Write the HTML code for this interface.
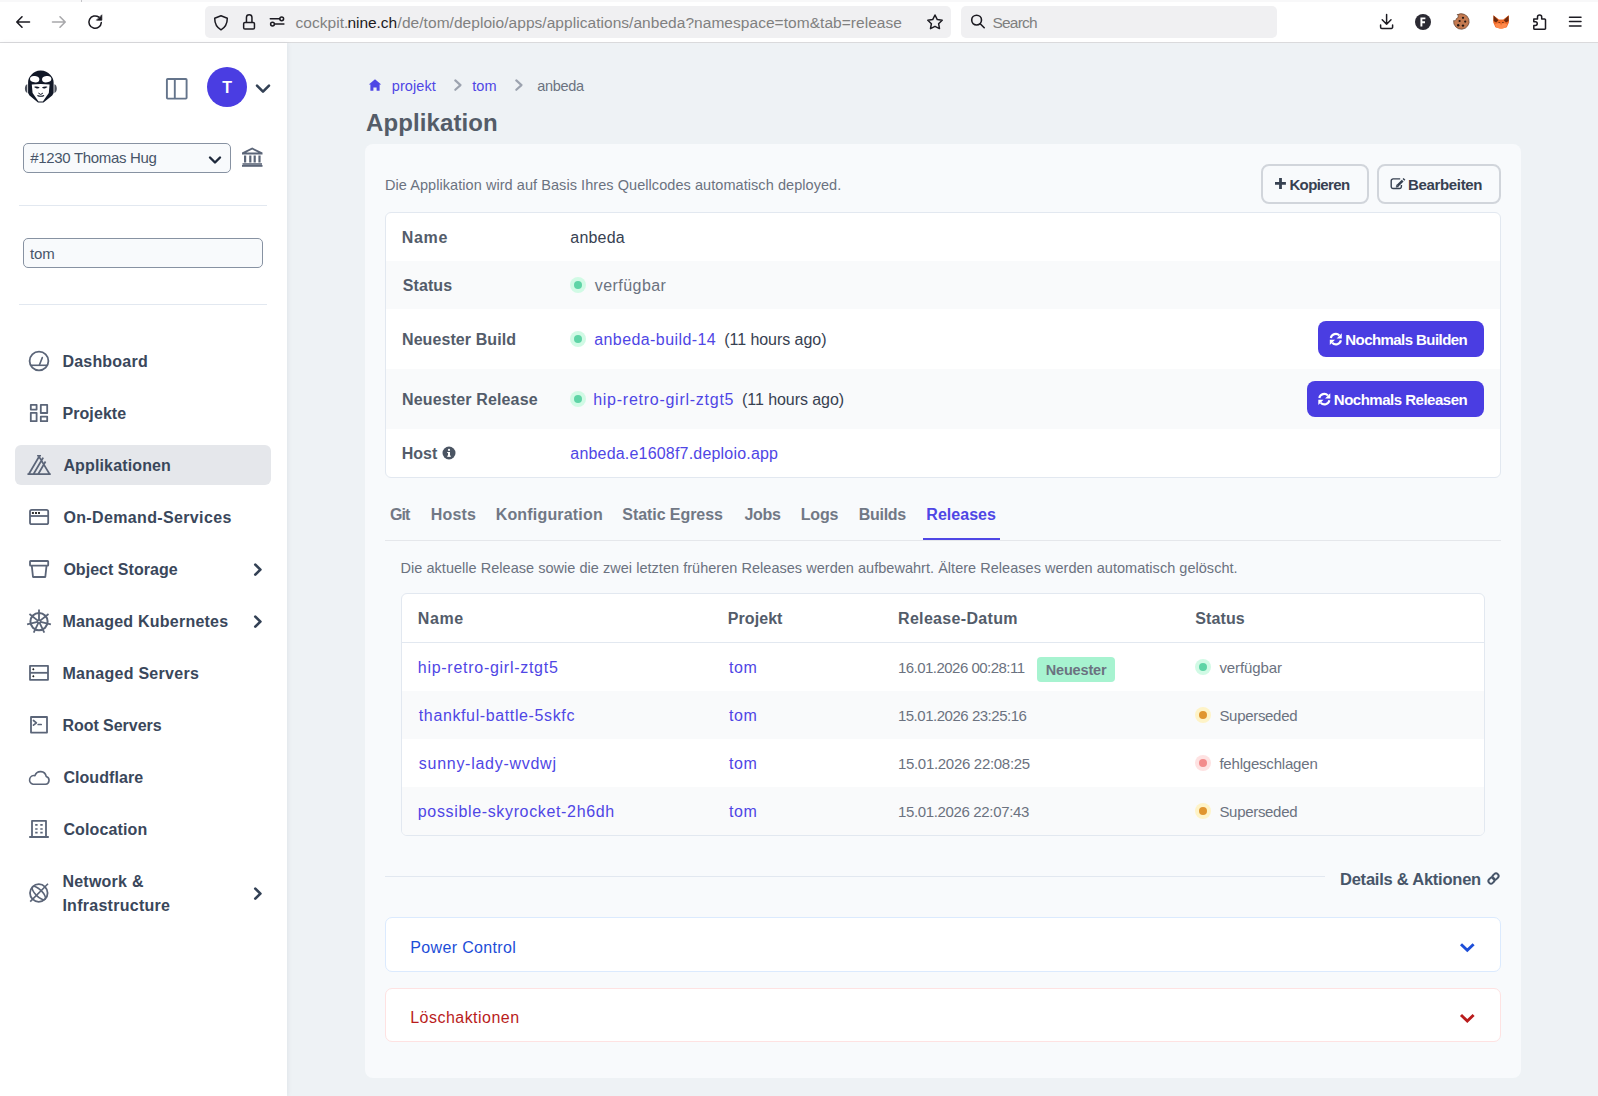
<!DOCTYPE html>
<html><head><meta charset="utf-8">
<style>
*{margin:0;padding:0;box-sizing:border-box}
html,body{width:1598px;height:1096px;overflow:hidden;background:#eef2f5;font-family:"Liberation Sans",sans-serif}
.t{position:absolute;white-space:nowrap;line-height:1;font-family:"Liberation Sans",sans-serif}
.a{position:absolute}
svg{position:absolute;overflow:visible}
</style></head><body>
<!-- browser chrome -->
<div class="a" style="left:0;top:0;width:1598px;height:2px;background:#f8f8f9"></div>
<div class="a" style="left:81px;top:0;width:1px;height:2px;background:#c4c4c8"></div>
<div class="a" style="left:0;top:2px;width:1598px;height:40px;background:#ffffff"></div>
<div class="a" style="left:0;top:42px;width:1598px;height:1px;background:#dadadc"></div>
<div class="a" style="left:205px;top:6px;width:746px;height:32px;background:#f0f0f2;border-radius:5px"></div>
<div class="a" style="left:961px;top:6px;width:316px;height:32px;background:#f0f0f2;border-radius:5px"></div>
<!-- back / fwd / reload -->
<svg style="left:0;top:0" width="120" height="44" viewBox="0 0 120 44" fill="none" stroke-linecap="round" stroke-linejoin="round">
 <path d="M29.5 22H17.2M22 16.8L16.8 22L22 27.2" stroke="#1c1b22" stroke-width="1.6"/>
 <path d="M52.5 22H64.8M60 16.8L65.2 22L60 27.2" stroke="#a8a8ab" stroke-width="1.6"/>
 <path d="M101.3 22.6A6.2 6.2 0 1 1 98.9 17.2" stroke="#1c1b22" stroke-width="1.5"/>
 <path d="M101.8 15.2V20.2H96.8Z" fill="#1c1b22" stroke="#1c1b22" stroke-width="0.8"/>
</svg>
<!-- url bar icons -->
<svg style="left:205px;top:6px" width="90" height="32" viewBox="0 0 90 32" fill="none" stroke="#1c1b22" stroke-width="1.5" stroke-linejoin="round">
 <path d="M16 9.8L22.3 12.2C22.3 18 20.6 21.2 16 23.8C11.4 21.2 9.7 18 9.7 12.2Z"/>
 <path d="M41.45 16.4V11.6A2.75 2.75 0 0 1 46.95 11.6V16.4"/>
 <rect x="38.65" y="16.5" width="10.8" height="6.6" rx="1.3"/>
 <path d="M65.3 12.8H74.6M69.6 18.1H78.9" stroke-linecap="round"/>
 <circle cx="76.7" cy="12.8" r="1.9"/><circle cx="67.5" cy="18.1" r="1.9"/>
</svg>
<svg style="left:925px;top:10px" width="22" height="24" viewBox="0 0 22 24" fill="none" stroke="#1c1b22" stroke-width="1.5" stroke-linejoin="round">
 <path d="M10 5L12.3 9.6L17.2 10.3L13.6 13.7L14.5 18.6L10 16.3L5.5 18.6L6.4 13.7L2.8 10.3L7.7 9.6Z"/>
</svg>
<svg style="left:961px;top:6px" width="40" height="32" viewBox="0 0 40 32" fill="none" stroke="#1c1b22" stroke-width="1.6" stroke-linecap="round">
 <circle cx="15.6" cy="14.1" r="4.9"/><path d="M19.2 17.7L23.2 21.7"/>
</svg>
<!-- right toolbar icons -->
<svg style="left:1370px;top:0" width="228" height="44" viewBox="1370 0 228 44" fill="none" stroke-linecap="round" stroke-linejoin="round">
 <path d="M1386.6 14.4V24.2M1382.2 19.8L1386.6 24.2L1391 19.8M1380.6 25V27.2A1.2 1.2 0 0 0 1381.8 28.4H1391.4A1.2 1.2 0 0 0 1392.6 27.2V25" stroke="#1c1b22" stroke-width="1.5"/>
 <circle cx="1423" cy="22" r="8" fill="#2b2a33"/>
 <path d="M1421.4 26.4V18.4H1425.4M1421.4 22.2H1425" stroke="#fff" stroke-width="1.9" stroke-linecap="butt" stroke-linejoin="miter"/>
 <path d="M1457.6 14.6A7.8 7.8 0 1 1 1453.6 20.6A2.2 2.2 0 0 0 1456.4 18.6A2.4 2.4 0 0 0 1457.6 14.6Z" fill="#c47a50" stroke="#4a2e20" stroke-width="0.6"/>
 <circle cx="1463" cy="17.8" r="1.1" fill="#231713"/><circle cx="1465.2" cy="21.6" r="1.1" fill="#231713"/>
 <circle cx="1459.6" cy="21" r="1.1" fill="#231713"/><circle cx="1458.2" cy="25.2" r="1.2" fill="#231713"/><circle cx="1463" cy="25.6" r="1.2" fill="#231713"/>
 <path d="M1493.4 15.2L1499 19.6H1503.2L1508.8 15.2L1509 22.2L1506.8 27.2L1502.6 28.4H1499.6L1495.4 27.2L1493.2 22.2Z" fill="#f06a28"/>
 <path d="M1493.6 15.4L1498.4 20.2L1496.2 22.6L1493.6 21Z M1508.6 15.4L1503.8 20.2L1506 22.6L1508.6 21Z" fill="#6e2a0e"/>
 <path d="M1495 24.2L1499.6 22.8L1501.1 25.6L1502.6 22.8L1507.2 24.2L1506 27.4L1501.1 28.8L1496.2 27.4Z" fill="#ff8a4c"/>
 <path d="M1498.8 22.6H1499.8M1502.4 22.6H1503.4" stroke="#7a3512" stroke-width="1"/>
 <path d="M1533.8 19.1H1537.5V17A2.1 2.1 0 0 1 1541.7 17V19.1H1544.6A0.9 0.9 0 0 1 1545.5 20V28.4A0.9 0.9 0 0 1 1544.6 29.3H1534.7A0.9 0.9 0 0 1 1533.8 28.4V25.4H1535.4A1.85 1.85 0 0 0 1535.4 21.7H1533.8Z" stroke="#1c1b22" stroke-width="1.5"/>
 <path d="M1569.5 17.2H1581M1569.5 21.6H1581M1569.5 26H1581" stroke="#1c1b22" stroke-width="1.5"/>
</svg>

<!-- sidebar -->
<div class="a" style="left:0;top:43px;width:287px;height:1053px;background:#ffffff;box-shadow:1px 0 4px rgba(100,116,139,0.10)"></div>
<!-- logo -->
<svg style="left:25px;top:70px" width="32" height="34" viewBox="0 0 32 34">
 <path d="M15.7 0.6C11.5 0.6 8.6 2.6 6.4 4.8C4.2 7 3.1 9.6 3.1 12.2V22.9L4.5 25.6L13 32.6H18.5L27.2 25.6L28.6 22.9V12.2C28.6 9.6 27.4 7 25.2 4.8C22.9 2.6 19.9 0.6 15.7 0.6Z" fill="#111827"/>
 <path d="M2.3 14.2C0.6 14.6 -0.1 16.6 -0.1 18.6C-0.1 20.6 0.6 22.6 2.3 23Z M29.4 14.2C31.1 14.6 31.8 16.6 31.8 18.6C31.8 20.6 31.1 22.6 29.4 23Z" fill="#111827" opacity="0.75"/>
 <ellipse cx="9.7" cy="9.2" rx="4.7" ry="3.2" transform="rotate(8 9.7 9.2)" fill="#fff"/>
 <ellipse cx="21.7" cy="9.2" rx="4.7" ry="3.2" transform="rotate(-8 21.7 9.2)" fill="#fff"/>
 <path d="M6.8 14.6Q15.7 13.6 24.6 14.6L23.8 22.9L17.9 31.4H13.5L7.6 22.9Z" fill="#fff"/>
 <path d="M9 17C10.8 16.3 13 16.5 14.7 17.6C13.8 18.6 12.4 18.8 11.2 18.3Z M22.6 17C20.8 16.3 18.6 16.5 16.9 17.6C17.8 18.6 19.2 18.8 20.4 18.3Z" fill="#111827"/>
 <path d="M13.4 23.1L15.7 24.5L17.9 23.1" stroke="#111827" stroke-width="1" fill="none"/>
 <path d="M12.4 25.4Q15.7 27.2 19.1 25.4" stroke="#111827" stroke-width="1.1" fill="none"/>
</svg>
<!-- panel toggle -->
<svg style="left:160px;top:72px" width="34" height="34" viewBox="160 72 34 34" fill="none" stroke="#64748b" stroke-width="1.9">
 <rect x="166.9" y="79" width="19.7" height="19.6" rx="0.8"/><path d="M174.8 79V98.6"/>
</svg>
<!-- avatar -->
<div class="a" style="left:207px;top:67px;width:40px;height:40px;border-radius:50%;background:#4a3de2"></div>
<svg style="left:250px;top:78px" width="24" height="20" viewBox="250 78 24 20" fill="none" stroke="#334155" stroke-width="2.6" stroke-linecap="round" stroke-linejoin="round">
 <path d="M257 85.6L263 91.6L269 85.6"/>
</svg>
<!-- account select -->
<div class="a" style="left:23px;top:143px;width:208px;height:30px;background:#f8fafc;border:1px solid #8792a2;border-radius:5px"></div>
<svg style="left:200px;top:150px" width="30" height="20" viewBox="200 150 30 20" fill="none" stroke="#1e293b" stroke-width="2.4" stroke-linecap="round" stroke-linejoin="round">
 <path d="M210 157.5L215 162.5L220 157.5"/>
</svg>
<!-- bank icon -->
<svg style="left:238px;top:144px" width="28" height="26" viewBox="238 144 28 26" fill="#5b6578">
 <path d="M252.2 147.6L262.5 152.6V154.4H242V152.6ZM252.2 149.6L246.2 152.5H258.2Z" fill-rule="evenodd"/>
 <rect x="244" y="155.5" width="2.2" height="7"/><rect x="249.2" y="155.5" width="2.2" height="7"/>
 <rect x="253.6" y="155.5" width="2.2" height="7"/><rect x="258.4" y="155.5" width="2.2" height="7"/>
 <rect x="242.5" y="163.2" width="19.5" height="1.6"/><rect x="242" y="165" width="20.5" height="1.8"/>
</svg>
<div class="a" style="left:19px;top:205px;width:248px;height:1px;background:#e2e8f0"></div>
<div class="a" style="left:23px;top:238px;width:240px;height:30px;background:#f8fafc;border:1px solid #8792a2;border-radius:5px"></div>
<div class="a" style="left:19px;top:304px;width:248px;height:1px;background:#e2e8f0"></div>
<!-- active nav -->
<div class="a" style="left:15px;top:445px;width:256px;height:40px;background:#e5e7eb;border-radius:6px"></div>
<!-- nav icons -->
<svg style="left:20px;top:340px" width="40" height="580" viewBox="20 340 40 580" fill="none" stroke="#5b6578" stroke-width="1.8" stroke-linejoin="round">
 <!-- dashboard -->
 <circle cx="39" cy="361" r="9.4"/>
 <path d="M30.5 365.3H47.5" stroke-width="1.6"/><path d="M39.5 364.8L42.3 357.6" stroke-width="1.6" stroke-linecap="round"/>
 <!-- projekte grid -->
 <rect x="30.8" y="404.8" width="5.8" height="4.8"/><rect x="40.8" y="404.8" width="6.4" height="8.2"/>
 <rect x="30.8" y="412.8" width="5.8" height="8.4"/><rect x="40.8" y="416.6" width="6.4" height="4.6"/>
 <!-- applikationen tent -->
 <path d="M28.3 474.1H49.9M29 473.8L38.4 457.8M33.7 473.8L42.8 458.3M38.4 473.8L45.1 462.2M49.4 473.8L39.5 457.4" stroke-width="1.7" stroke-linecap="square"/>
 <path d="M37.1 455.7H41M39 455.9V458.2" stroke-width="1.6"/>
 <!-- on-demand window -->
 <rect x="30" y="509.8" width="18.2" height="14.4" rx="1.8"/><path d="M30 516H48.2"/>
 <path d="M31.9 512H33.9V514H31.9ZM35 512H37V514H35ZM38 512H40V514H38Z" fill="#333" stroke="none"/>
 <!-- bucket -->
 <rect x="30" y="561" width="18.2" height="4.6" rx="0.6"/><path d="M31.8 565.8L33 577H45.3L46.5 565.8"/>
 <!-- servers -->
 <rect x="30" y="665.8" width="18" height="14" /><path d="M30 672.8H48"/>
 <path d="M33.3 668L34.5 669.3L33.3 670.6L32.1 669.3ZM33.3 675L34.5 676.3L33.3 677.6L32.1 676.3Z" fill="#222" stroke="none"/>
 <!-- terminal -->
 <rect x="31" y="717" width="16" height="15.6"/><path d="M33.5 720.5L36.4 722.8L33.5 725.1M38.2 724.5H41.2" stroke-width="1.7" stroke-linecap="round"/>
 <!-- cloud -->
 <path d="M33 784.2H45.5A4 4 0 0 0 46.2 776.4A5.8 5.8 0 0 0 35 775.6A4.4 4.4 0 0 0 33 784.2Z" stroke-width="1.6"/>
 <!-- building -->
 <path d="M32 837V820.8H46V837M29.2 837H48.8" stroke-width="1.8"/>
 <path d="M35.2 824.9H37.6M40.3 824.9H42.7M35.2 829H37.6M40.3 829H42.7M35.2 832.7H37.6M40.3 832.7H42.7" stroke-width="1.7"/>
 <!-- globe crossed -->
 <circle cx="38.8" cy="893" r="8.8" stroke-width="1.8"/>
 <ellipse cx="38.8" cy="893" rx="8.8" ry="3.4" transform="rotate(45 38.8 893)" stroke-width="1.6"/>
 <path d="M30.2 901.6L48 883.8" stroke-width="1.6"/>
</svg>
<!-- k8s wheel -->
<svg style="left:24px;top:603px" width="32" height="40" viewBox="0 0 32 40" fill="none" stroke="#5b6578">
 <g transform="translate(15,18.6)">
  <circle r="8.6" stroke-width="2"/>
  <circle r="1.5" stroke-width="1.5"/>
  <g stroke-width="1.8">
   <path d="M0 -1.5V-12.2"/>
   <path d="M0 -1.5V-12.2" transform="rotate(51.43)"/>
   <path d="M0 -1.5V-12.2" transform="rotate(102.86)"/>
   <path d="M0 -1.5V-12.2" transform="rotate(154.29)"/>
   <path d="M0 -1.5V-12.2" transform="rotate(205.71)"/>
   <path d="M0 -1.5V-12.2" transform="rotate(257.14)"/>
   <path d="M0 -1.5V-12.2" transform="rotate(308.57)"/>
  </g>
 </g>
</svg>
<!-- sidebar chevrons -->
<svg style="left:245px;top:555px" width="24" height="350" viewBox="245 555 24 350" fill="none" stroke="#334155" stroke-width="2.7" stroke-linecap="round" stroke-linejoin="round">
 <path d="M255.3 564.6L260.4 569.6L255.3 574.6"/>
 <path d="M255.3 616.6L260.4 621.6L255.3 626.6"/>
 <path d="M255.3 888.6L260.4 893.6L255.3 898.6"/>
</svg>

<!-- main -->
<svg style="left:366px;top:76px" width="200" height="20" viewBox="366 76 200 20">
 <path d="M375 79.2L381.2 84.6H379.6V90.8H376.6V87.4H373.4V90.8H370.4V84.6H368.8Z" fill="#4f46e5"/>
 <path d="M455.3 80.4L460.5 85.1L455.3 89.8M516.3 80.4L521.5 85.1L516.3 89.8" fill="none" stroke="#9ca3af" stroke-width="2.1" stroke-linecap="round" stroke-linejoin="round"/>
</svg>
<div class="a" style="left:365px;top:144px;width:1156px;height:934px;background:#f8fafc;border-radius:8px"></div>
<!-- buttons -->
<div class="a" style="left:1261px;top:164px;width:108px;height:40px;border:2px solid #d1d5db;border-radius:8px"></div>
<div class="a" style="left:1377px;top:164px;width:124px;height:40px;border:2px solid #d1d5db;border-radius:8px"></div>
<svg style="left:1270px;top:172px" width="240" height="22" viewBox="1270 172 240 22" fill="none" stroke="#374151">
 <path d="M1280.5 178V188.9M1275 183.4H1285.9" stroke-width="2.8"/>
 <path d="M1400.2 178.9H1393.1A1.9 1.9 0 0 0 1391.2 180.8V186.6A1.9 1.9 0 0 0 1393.1 188.5H1399.5A1.9 1.9 0 0 0 1401.4 186.6V185.1" stroke-width="1.4"/>
 <path d="M1397.6 185.7L1402.7 180.6M1403.4 179.9L1404.5 178.8" stroke-width="2.5"/>
 <path d="M1396.2 187.3L1396.7 184.9L1398.5 186.7Z" fill="#374151" stroke-width="0.6"/>
</svg>
<!-- details box -->
<div class="a" style="left:385px;top:212px;width:1116px;height:266px;background:#ffffff;border:1px solid #e2e8f0;border-radius:6px;overflow:hidden">
 <div class="a" style="left:0;top:48px;width:1114px;height:48px;background:#f9fafb"></div>
 <div class="a" style="left:0;top:156px;width:1114px;height:60px;background:#f9fafb"></div>
</div>
<!-- status dots (details) -->
<div class="a" style="left:570px;top:277px;width:16px;height:16px;border-radius:50%;background:#d1fae5"></div>
<div class="a" style="left:574px;top:281px;width:8px;height:8px;border-radius:50%;background:#5fd4a6"></div>
<div class="a" style="left:570px;top:331px;width:16px;height:16px;border-radius:50%;background:#d1fae5"></div>
<div class="a" style="left:574px;top:335px;width:8px;height:8px;border-radius:50%;background:#5fd4a6"></div>
<div class="a" style="left:570px;top:391px;width:16px;height:16px;border-radius:50%;background:#d1fae5"></div>
<div class="a" style="left:574px;top:395px;width:8px;height:8px;border-radius:50%;background:#5fd4a6"></div>
<!-- info icon -->
<svg style="left:442px;top:446px" width="14" height="14" viewBox="0 0 14 14">
 <circle cx="7" cy="7" r="6.5" fill="#4b5563"/>
 <rect x="6" y="6" width="2" height="4.4" fill="#fff"/><rect x="5.2" y="9.6" width="3.6" height="1.2" fill="#fff"/><rect x="5.2" y="6" width="1.6" height="1" fill="#fff"/>
 <circle cx="7" cy="3.9" r="1.1" fill="#fff"/>
</svg>
<!-- action buttons -->
<div class="a" style="left:1318px;top:321px;width:166px;height:36px;background:#4a3de2;border-radius:8px"></div>
<div class="a" style="left:1307px;top:381px;width:177px;height:36px;background:#4a3de2;border-radius:8px"></div>
<svg style="left:1310px;top:325px" width="40" height="90" viewBox="1310 325 40 90" fill="none" stroke="#fff" stroke-width="2.1">
 <path d="M1330.8 338.0A5.1 5.1 0 0 1 1339.4 335.4M1340.9 340.2A5.1 5.1 0 0 1 1332.2 342.8"/>
 <path d="M1341.8 333.2V338.4H1336.6Z M1329.8 345.0V339.8H1335.0Z" fill="#fff" stroke="none"/>
 <path d="M1319.3 398.0A5.1 5.1 0 0 1 1327.9 395.4M1329.4 400.2A5.1 5.1 0 0 1 1320.7 402.8"/>
 <path d="M1330.3 393.2V398.4H1325.1Z M1318.3 405.0V399.8H1323.5Z" fill="#fff" stroke="none"/>
</svg>
<!-- tabs -->
<div class="a" style="left:385px;top:540px;width:1116px;height:1px;background:#e5e7eb"></div>
<div class="a" style="left:923px;top:538px;width:77px;height:2px;background:#4f46e5"></div>
<!-- releases table -->
<div class="a" style="left:401px;top:593px;width:1084px;height:243px;background:#ffffff;border:1px solid #e2e8f0;border-radius:6px;overflow:hidden">
 <div class="a" style="left:0;top:48px;width:1082px;height:1px;background:#e2e8f0"></div>
 <div class="a" style="left:0;top:97px;width:1082px;height:48px;background:#f9fafb"></div>
 <div class="a" style="left:0;top:193px;width:1082px;height:48px;background:#f9fafb"></div>
</div>
<div class="a" style="left:1037px;top:657px;width:78px;height:25px;background:#a7f3d0;border-radius:4px"></div>
<div class="a" style="left:1195px;top:659px;width:16px;height:16px;border-radius:50%;background:#d1fae5"></div>
<div class="a" style="left:1199px;top:663px;width:8px;height:8px;border-radius:50%;background:#5fd4a6"></div>
<div class="a" style="left:1195px;top:707px;width:16px;height:16px;border-radius:50%;background:#fef3c7"></div>
<div class="a" style="left:1199px;top:711px;width:8px;height:8px;border-radius:50%;background:#e0952f"></div>
<div class="a" style="left:1195px;top:755px;width:16px;height:16px;border-radius:50%;background:#fee2e2"></div>
<div class="a" style="left:1199px;top:759px;width:8px;height:8px;border-radius:50%;background:#f28b8b"></div>
<div class="a" style="left:1195px;top:803px;width:16px;height:16px;border-radius:50%;background:#fef3c7"></div>
<div class="a" style="left:1199px;top:807px;width:8px;height:8px;border-radius:50%;background:#e0952f"></div>
<!-- details & aktionen -->
<div class="a" style="left:385px;top:876px;width:940px;height:1px;background:#e2e8f0"></div>
<svg style="left:1480px;top:866px" width="26" height="26" viewBox="1480 866 26 26" fill="none" stroke="#475569" stroke-width="1.9">
 <g transform="rotate(-45 1493.5 878.5)">
  <rect x="1487.4" y="875.95" width="6.6" height="5.1" rx="2.5"/>
  <rect x="1493" y="875.95" width="6.6" height="5.1" rx="2.5"/>
 </g>
</svg>
<div class="a" style="left:385px;top:917px;width:1116px;height:55px;background:#ffffff;border:1px solid #dbeafe;border-radius:7px"></div>
<div class="a" style="left:385px;top:988px;width:1116px;height:54px;background:#ffffff;border:1px solid #fee2e2;border-radius:7px"></div>
<svg style="left:1455px;top:938px" width="25" height="90" viewBox="1455 938 25 90" fill="none" stroke-width="2.9" stroke-linecap="butt" stroke-linejoin="miter">
 <path d="M1461 944.2L1467.3 950.3L1473.6 944.2" stroke="#1d4ed8"/>
 <path d="M1461 1015L1467.3 1021.1L1473.6 1015" stroke="#b91c1c"/>
</svg>
<span class="t" style="left:295.60px;top:15.28px;font-size:15.5px;font-weight:400;color:#808080;letter-spacing:0.023px;">cockpit.</span>
<span class="t" style="left:347.60px;top:15.28px;font-size:15.5px;font-weight:400;color:#1c1b22;letter-spacing:-0.094px;">nine.ch</span>
<span class="t" style="left:397.60px;top:15.28px;font-size:15.5px;font-weight:400;color:#808080;letter-spacing:0.043px;">/de/tom/deploio/apps/applications/anbeda?namespace=tom&amp;tab=release</span>
<span class="t" style="left:992.50px;top:15.28px;font-size:15.5px;font-weight:400;color:#7f7f7f;letter-spacing:-0.798px;">Search</span>
<span class="t" style="left:222.20px;top:80.46px;font-size:16px;font-weight:700;color:#ffffff;">T</span>
<span class="t" style="left:30.30px;top:150.40px;font-size:15px;font-weight:400;color:#475569;letter-spacing:-0.327px;">#1230 Thomas Hug</span>
<span class="t" style="left:30.10px;top:245.50px;font-size:15px;font-weight:400;color:#475569;letter-spacing:-0.205px;">tom</span>
<span class="t" style="left:62.40px;top:354.46px;font-size:16px;font-weight:700;color:#3a475b;letter-spacing:0.213px;">Dashboard</span>
<span class="t" style="left:62.40px;top:406.46px;font-size:16px;font-weight:700;color:#3a475b;letter-spacing:0.094px;">Projekte</span>
<span class="t" style="left:63.40px;top:458.46px;font-size:16px;font-weight:700;color:#3a475b;letter-spacing:0.141px;">Applikationen</span>
<span class="t" style="left:63.40px;top:510.46px;font-size:16px;font-weight:700;color:#3a475b;letter-spacing:0.357px;">On-Demand-Services</span>
<span class="t" style="left:63.40px;top:562.46px;font-size:16px;font-weight:700;color:#3a475b;letter-spacing:0.030px;">Object Storage</span>
<span class="t" style="left:62.40px;top:614.46px;font-size:16px;font-weight:700;color:#3a475b;letter-spacing:0.229px;">Managed Kubernetes</span>
<span class="t" style="left:62.40px;top:666.46px;font-size:16px;font-weight:700;color:#3a475b;letter-spacing:0.278px;">Managed Servers</span>
<span class="t" style="left:62.40px;top:718.46px;font-size:16px;font-weight:700;color:#3a475b;letter-spacing:-0.036px;">Root Servers</span>
<span class="t" style="left:63.40px;top:770.46px;font-size:16px;font-weight:700;color:#3a475b;letter-spacing:0.065px;">Cloudflare</span>
<span class="t" style="left:63.40px;top:822.46px;font-size:16px;font-weight:700;color:#3a475b;letter-spacing:0.123px;">Colocation</span>
<span class="t" style="left:62.40px;top:874.46px;font-size:16px;font-weight:700;color:#3a475b;letter-spacing:0.241px;">Network &amp;</span>
<span class="t" style="left:62.40px;top:898.46px;font-size:16px;font-weight:700;color:#3a475b;letter-spacing:0.275px;">Infrastructure</span>
<span class="t" style="left:391.80px;top:79.43px;font-size:14.5px;font-weight:400;color:#4f46e5;letter-spacing:0.085px;">projekt</span>
<span class="t" style="left:472.30px;top:79.43px;font-size:14.5px;font-weight:400;color:#4f46e5;">tom</span>
<span class="t" style="left:537.20px;top:79.43px;font-size:14.5px;font-weight:400;color:#6b7280;letter-spacing:-0.304px;">anbeda</span>
<span class="t" style="left:366.00px;top:111.48px;font-size:24px;font-weight:700;color:#545c68;letter-spacing:0.100px;">Applikation</span>
<span class="t" style="left:385.00px;top:177.93px;font-size:14.5px;font-weight:400;color:#6b7280;letter-spacing:0.060px;">Die Applikation wird auf Basis Ihres Quellcodes automatisch deployed.</span>
<span class="t" style="left:1289.40px;top:177.30px;font-size:15px;font-weight:700;color:#374151;letter-spacing:-0.607px;">Kopieren</span>
<span class="t" style="left:1408.00px;top:177.30px;font-size:15px;font-weight:700;color:#374151;letter-spacing:-0.340px;">Bearbeiten</span>
<span class="t" style="left:401.80px;top:229.86px;font-size:16px;font-weight:700;color:#535c6a;letter-spacing:0.640px;">Name</span>
<span class="t" style="left:402.80px;top:277.66px;font-size:16px;font-weight:700;color:#535c6a;letter-spacing:0.080px;">Status</span>
<span class="t" style="left:402.00px;top:332.46px;font-size:16px;font-weight:700;color:#535c6a;letter-spacing:0.081px;">Neuester Build</span>
<span class="t" style="left:402.00px;top:392.46px;font-size:16px;font-weight:700;color:#535c6a;letter-spacing:0.146px;">Neuester Release</span>
<span class="t" style="left:401.80px;top:446.46px;font-size:16px;font-weight:700;color:#535c6a;letter-spacing:-0.042px;">Host</span>
<span class="t" style="left:570.30px;top:230.46px;font-size:16px;font-weight:400;color:#374151;letter-spacing:0.202px;">anbeda</span>
<span class="t" style="left:594.70px;top:278.46px;font-size:16px;font-weight:400;color:#6b7280;letter-spacing:0.454px;">verfügbar</span>
<span class="t" style="left:594.20px;top:332.06px;font-size:16px;font-weight:400;color:#4f46e5;letter-spacing:0.418px;">anbeda-build-14</span>
<span class="t" style="left:724.20px;top:332.06px;font-size:16px;font-weight:400;color:#374151;letter-spacing:-0.042px;">(11 hours ago)</span>
<span class="t" style="left:593.20px;top:392.06px;font-size:16px;font-weight:400;color:#4f46e5;letter-spacing:0.739px;">hip-retro-girl-ztgt5</span>
<span class="t" style="left:742.00px;top:392.06px;font-size:16px;font-weight:400;color:#374151;letter-spacing:-0.057px;">(11 hours ago)</span>
<span class="t" style="left:570.30px;top:446.06px;font-size:16px;font-weight:400;color:#4f46e5;letter-spacing:0.194px;">anbeda.e1608f7.deploio.app</span>
<span class="t" style="left:1345.30px;top:332.30px;font-size:15px;font-weight:700;color:#ffffff;letter-spacing:-0.566px;">Nochmals Builden</span>
<span class="t" style="left:1333.80px;top:392.30px;font-size:15px;font-weight:700;color:#ffffff;letter-spacing:-0.492px;">Nochmals Releasen</span>
<span class="t" style="left:390.00px;top:507.46px;font-size:16px;font-weight:700;color:#717885;letter-spacing:-0.945px;">Git</span>
<span class="t" style="left:430.70px;top:507.46px;font-size:16px;font-weight:700;color:#717885;letter-spacing:0.211px;">Hosts</span>
<span class="t" style="left:495.70px;top:507.46px;font-size:16px;font-weight:700;color:#717885;letter-spacing:0.176px;">Konfiguration</span>
<span class="t" style="left:622.30px;top:507.46px;font-size:16px;font-weight:700;color:#717885;letter-spacing:-0.065px;">Static Egress</span>
<span class="t" style="left:744.50px;top:507.46px;font-size:16px;font-weight:700;color:#717885;letter-spacing:-0.315px;">Jobs</span>
<span class="t" style="left:800.70px;top:507.46px;font-size:16px;font-weight:700;color:#717885;letter-spacing:-0.140px;">Logs</span>
<span class="t" style="left:858.80px;top:507.46px;font-size:16px;font-weight:700;color:#717885;letter-spacing:-0.298px;">Builds</span>
<span class="t" style="left:926.30px;top:507.46px;font-size:16px;font-weight:700;color:#4f46e5;letter-spacing:0.030px;">Releases</span>
<span class="t" style="left:400.60px;top:560.53px;font-size:14.5px;font-weight:400;color:#6b7280;letter-spacing:0.029px;">Die aktuelle Release sowie die zwei letzten früheren Releases werden aufbewahrt. Ältere Releases werden automatisch gelöscht.</span>
<span class="t" style="left:417.80px;top:611.26px;font-size:16px;font-weight:700;color:#535c6a;letter-spacing:0.607px;">Name</span>
<span class="t" style="left:727.80px;top:611.26px;font-size:16px;font-weight:700;color:#535c6a;letter-spacing:0.064px;">Projekt</span>
<span class="t" style="left:898.00px;top:611.26px;font-size:16px;font-weight:700;color:#535c6a;letter-spacing:0.327px;">Release-Datum</span>
<span class="t" style="left:1195.20px;top:611.26px;font-size:16px;font-weight:700;color:#535c6a;letter-spacing:0.120px;">Status</span>
<span class="t" style="left:417.80px;top:660.46px;font-size:16px;font-weight:400;color:#4f46e5;letter-spacing:0.723px;">hip-retro-girl-ztgt5</span>
<span class="t" style="left:729.10px;top:660.46px;font-size:16px;font-weight:400;color:#4f46e5;letter-spacing:0.578px;">tom</span>
<span class="t" style="left:897.90px;top:660.30px;font-size:15px;font-weight:400;color:#6b7280;letter-spacing:-0.521px;">16.01.2026 00:28:11</span>
<span class="t" style="left:1219.40px;top:660.00px;font-size:15px;font-weight:400;color:#6b7280;letter-spacing:-0.084px;">verfügbar</span>
<span class="t" style="left:418.80px;top:708.46px;font-size:16px;font-weight:400;color:#4f46e5;letter-spacing:0.621px;">thankful-battle-5skfc</span>
<span class="t" style="left:729.10px;top:708.46px;font-size:16px;font-weight:400;color:#4f46e5;letter-spacing:0.578px;">tom</span>
<span class="t" style="left:897.90px;top:708.30px;font-size:15px;font-weight:400;color:#6b7280;letter-spacing:-0.477px;">15.01.2026 23:25:16</span>
<span class="t" style="left:1219.40px;top:708.00px;font-size:15px;font-weight:400;color:#6b7280;letter-spacing:-0.306px;">Superseded</span>
<span class="t" style="left:418.80px;top:756.46px;font-size:16px;font-weight:400;color:#4f46e5;letter-spacing:0.726px;">sunny-lady-wvdwj</span>
<span class="t" style="left:729.10px;top:756.46px;font-size:16px;font-weight:400;color:#4f46e5;letter-spacing:0.578px;">tom</span>
<span class="t" style="left:897.90px;top:756.30px;font-size:15px;font-weight:400;color:#6b7280;letter-spacing:-0.299px;">15.01.2026 22:08:25</span>
<span class="t" style="left:1219.40px;top:756.00px;font-size:15px;font-weight:400;color:#6b7280;letter-spacing:-0.198px;">fehlgeschlagen</span>
<span class="t" style="left:417.80px;top:804.46px;font-size:16px;font-weight:400;color:#4f46e5;letter-spacing:0.651px;">possible-skyrocket-2h6dh</span>
<span class="t" style="left:729.10px;top:804.46px;font-size:16px;font-weight:400;color:#4f46e5;letter-spacing:0.578px;">tom</span>
<span class="t" style="left:897.90px;top:804.30px;font-size:15px;font-weight:400;color:#6b7280;letter-spacing:-0.344px;">15.01.2026 22:07:43</span>
<span class="t" style="left:1219.40px;top:804.00px;font-size:15px;font-weight:400;color:#6b7280;letter-spacing:-0.306px;">Superseded</span>
<span class="t" style="left:1045.70px;top:663.13px;font-size:14.5px;font-weight:700;color:#6b7280;letter-spacing:-0.159px;">Neuester</span>
<span class="t" style="left:1340.00px;top:871.43px;font-size:16.5px;font-weight:700;color:#475569;letter-spacing:-0.235px;">Details &amp; Aktionen</span>
<span class="t" style="left:410.20px;top:940.26px;font-size:16px;font-weight:400;color:#1d4ed8;letter-spacing:0.357px;">Power Control</span>
<span class="t" style="left:410.20px;top:1010.46px;font-size:16px;font-weight:400;color:#b91c1c;letter-spacing:0.476px;">Löschaktionen</span>
</body></html>
